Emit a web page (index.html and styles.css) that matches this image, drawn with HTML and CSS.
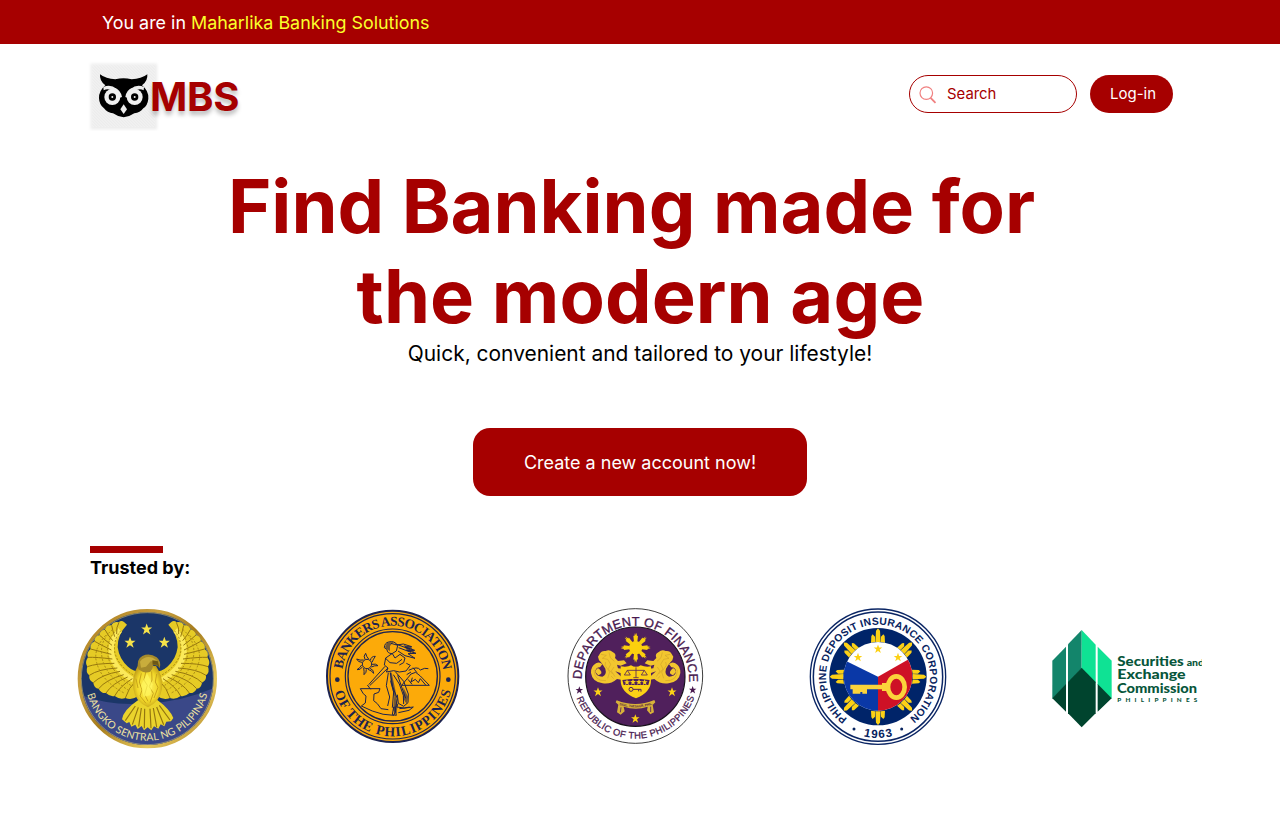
FILE: index.html
```html
<!DOCTYPE html>
<html lang="en">
<head>
<meta charset="utf-8">
<title>Maharlika Banking Solutions</title>
<link rel="stylesheet" href="styles.css">
</head>
<body>
<div class="topbar"><span>You are in <span class="topbar-brand">Maharlika Banking Solutions</span></span></div>

<header class="header">
  <div class="logo">
    <svg class="owl" viewBox="24 29 213 213" aria-hidden="true">
      <defs>
        <filter id="soft" x="-10%" y="-10%" width="120%" height="120%"><feGaussianBlur stdDeviation="4"/></filter>
        <pattern id="hatch" width="9" height="9" patternUnits="userSpaceOnUse"><path d="M0 0L9 9" stroke="#f8f8f8" stroke-width="2"/></pattern>
      </defs>
      <rect x="32" y="40" width="199" height="197" fill="#ececec" filter="url(#soft)"/>
      <rect x="36" y="42" width="190" height="188" fill="url(#hatch)"/>
      <path d="M60 72Q78 86 106 87Q130 81 155 87Q184 86 202 72Q204 92 186 105Q207 122 205 145Q203 165 190 174Q180 187 163 189Q147 200 131 201Q115 200 99 189Q82 187 72 174Q58 164 57 144Q56 122 76 105Q58 92 60 72Z" fill="#000"/>
      <path d="M70 110Q92 100 110 116L98 122Q84 112 71 120ZM192 110Q170 100 152 116L164 122Q178 112 191 120Z" fill="#eee"/>
      <circle cx="97" cy="140" r="24" fill="#f0f0f0"/><circle cx="164" cy="140" r="24" fill="#f0f0f0"/>
      <path d="M103 112Q122 118 126 140L119 142Q116 124 101 118ZM158 112Q139 118 136 140L142 142Q145 124 160 118Z" fill="#eee"/>
      <circle cx="97" cy="140" r="11" fill="#000"/><circle cx="164" cy="140" r="11" fill="#000"/>
      <circle cx="97" cy="140" r="3" fill="#eee"/><circle cx="164" cy="140" r="3" fill="#eee"/>
      <path d="M131 162L141 177L131 191L121 177Z" fill="#eee"/>
    </svg>
    <span class="logo-text">MBS</span>
  </div>
  <div class="actions">
    <label class="search">
      <svg class="search-icon" viewBox="0 0 18 18" aria-hidden="true"><circle cx="7.3" cy="7.1" r="6.3"/><path d="M11.6 11.8L16.5 16.8"/></svg>
      <span class="search-text">Search</span>
    </label>
    <button class="login">Log-in</button>
  </div>
</header>

<main>
  <h1 class="headline"><span class="headline-first">Find Banking made for</span><span class="headline-second">the modern age</span></h1>
  <p class="tagline">Quick, convenient and tailored to your lifestyle!</p>
  <button class="cta">Create a new account now!</button>

  <section class="trusted">
    <div class="rule"></div>
    <h2 class="trusted-title">Trusted by:</h2>
    <div class="seals">

      <svg class="seal" viewBox="0 0 465 465">
        <defs>
          <linearGradient id="gold" x1="0" y1="0" x2="1" y2="1">
            <stop offset="0" stop-color="#a87818"/><stop offset=".3" stop-color="#c8a040"/><stop offset=".5" stop-color="#a67c1c"/><stop offset=".75" stop-color="#e6c85c"/><stop offset="1" stop-color="#a87c20"/>
          </linearGradient>
          <radialGradient id="plume" cx=".5" cy=".5" r=".6"><stop offset="0" stop-color="#fff36a"/><stop offset=".6" stop-color="#f2d829"/><stop offset="1" stop-color="#b08a14"/></radialGradient>
          <clipPath id="disc"><circle cx="232" cy="236" r="199"/></clipPath>
          <path id="star" d="M0-16L4-5L15-5L6 2L10 14L0 7L-10 14L-6 2L-15-5L-4-5Z"/>
          <g id="wing">
            <path d="M162 66Q154 60 146 67Q132 63 124 76Q109 75 104 89Q90 91 88 105Q72 110 74 124Q59 132 62 147Q48 158 54 172Q43 188 52 200Q46 216 58 226Q56 242 70 248Q72 264 86 266Q94 281 108 279Q122 292 134 288Q150 300 166 294Q188 302 206 286L224 214Q196 220 174 200Q148 178 143 142Q142 104 171 74Z" fill="#e6cb25"/>
            <path d="M150 90Q122 118 124 158Q132 208 190 240" fill="none" stroke="#fbe95a" stroke-width="16"/>
            <g fill="none" stroke="#96770e" stroke-width="3">
              <path d="M147 67Q138 82 140 102M125 76Q128 92 134 110M105 89Q113 105 128 122M88 105Q103 119 126 136M74 124Q93 135 124 150M62 147Q84 153 124 163M54 172Q79 171 127 177M52 200Q79 190 133 190M58 226Q86 207 142 204M70 248Q94 224 150 214M86 266Q108 239 161 224M108 279Q126 251 173 231M134 288Q150 258 187 236M166 294Q174 265 200 240"/>
            </g>
            <g fill="none" stroke="#a88915" stroke-width="3" stroke-dasharray="6 5">
              <path d="M142 88Q108 118 113 162Q120 215 182 256M128 88Q87 123 96 172Q105 225 174 270M107 106Q68 150 80 188Q95 244 164 280M153 92Q130 118 134 155Q143 200 198 229"/>
            </g>
          </g>
        </defs>
        <circle cx="232" cy="236" r="204" fill="#1b3668" stroke="url(#gold)" stroke-width="10"/>
        <path d="M30 284Q120 320 232 310Q340 304 436 262L436 450H30Z" fill="#3a4888" clip-path="url(#disc)"/>
        <circle cx="232" cy="236" r="198" fill="none" stroke="#e3cd76" stroke-width="1.5"/>
        <g fill="#f6e34a"><use href="#star" transform="translate(230 88) scale(1.1)"/><use href="#star" transform="translate(180 128) scale(1.1)"/><use href="#star" transform="translate(283 128) scale(1.1)"/></g>
        <use href="#wing"/><use href="#wing" transform="translate(466 0) scale(-1 1)"/>
        <path d="M205 300Q160 330 156 358L170 370L178 366L184 380L196 374L203 387L215 378L222 391L233 382L244 391L252 379L265 386L272 373L283 379L289 365L303 364L310 354Q300 328 262 300Z" fill="#ead32c"/>
        <path d="M196 318L166 362M205 322L187 374M214 324L206 380M224 326L223 385M240 326L243 385M250 324L260 381M260 321L281 374M268 316L300 360" stroke="#937510" stroke-width="3.5"/>
        <path d="M204 196Q184 232 190 266Q195 304 234 322Q270 304 276 266Q280 230 258 198Z" fill="url(#plume)"/>
        <path d="M214 220L208 246L216 270L210 288L228 310M228 212L222 240L232 256L224 284L234 304M245 214L246 240L238 260L250 280L240 308M260 222L256 246L264 262L252 294M198 236L204 264" fill="none" stroke="#c9a51b" stroke-width="3"/>
        <path d="M231 220L248 253L241 286L221 290L213 256Z" fill="#fff65c" opacity=".7"/>
        <path d="M205 208Q198 178 217 168Q239 158 260 172Q275 184 269 205Q263 194 250 195Q248 207 241 215Q223 222 205 208Z" fill="#a58a2b"/>
        <path d="M210 185Q224 166 248 173L264 184L242 184L228 200L213 203Z" fill="#c9ad3c"/>
        <path d="M247 181L263 183L269 204L260 194L248 194Z" fill="#6d5716"/>
        <path id="bsp" d="M46 236A186 186 0 0 0 418 236" fill="none"/>
        <text class="t-lato" font-size="31" fill="#f0e3a0"><textPath href="#bsp" startOffset="47" textLength="490">BANGKO SENTRAL NG PILIPINAS</textPath></text>
      </svg>

      <svg class="seal" viewBox="-12 0 465 465">
        <g fill="none" stroke="#1c2350">
          <circle cx="230" cy="229" r="197" fill="#fcaa09" stroke-width="6"/>
          <circle cx="230" cy="229" r="188" stroke-width="3.5"/>
          <circle cx="230" cy="229" r="142" stroke-width="3.5"/>
          <circle cx="230" cy="229" r="134" stroke-width="4"/>
        </g>
        <path id="bapTop" d="M78 229A152 152 0 0 1 382 229" fill="none"/>
        <path id="bapBot" d="M50 229A180 180 0 0 0 410 229" fill="none"/>
        <g class="t-serif" fill="#1c2350">
          <text font-size="40"><textPath href="#bapTop" startOffset="21" textLength="438">BANKERS ASSOCIATION</textPath></text>
          <text font-size="41"><textPath href="#bapBot" startOffset="47" textLength="474">OF THE PHILIPPINES</textPath></text>
        </g>
        <circle cx="64" cy="239" r="7" fill="#1c2350"/><circle cx="397" cy="239" r="7" fill="#1c2350"/>
        <g fill="none" stroke="#1c2350" stroke-width="3" stroke-linejoin="round">
          <circle cx="153" cy="192" r="14"/>
          <path d="M147 178Q141 168 149 160Q151 170 158 177M163 181Q166 168 178 169Q172 177 168 187M168 193Q180 190 186 197Q176 196 166 201M162 205Q174 210 173 220Q166 211 156 208M151 208Q152 218 144 224Q145 214 143 204M140 200Q133 211 123 209Q132 204 137 195M138 187Q126 187 122 177Q132 182 143 180"/>
          <path d="M218 126Q206 128 205 143L213 148Q213 160 228 161L241 153L245 137Q236 121 218 126ZM225 130Q241 139 262 132L287 140L267 141L296 151L272 151L300 160L276 161L297 175L267 167L246 153M240 132L282 148M248 143L285 157M229 161L237 174L252 163L267 174L263 188L250 195M228 161L209 174L205 195L216 204L211 216L233 212L250 216L270 213L283 196L271 190M209 175L222 188L242 190L258 178M216 204L161 257M207 199L158 254M154 255L164 268"/>
          <path d="M217 218L211 257L221 291L215 318M223 218L230 260L244 296L235 344M238 215L263 244L277 282L276 308L263 319L247 310L244 284M232 224L250 252L262 286L263 312M224 242L233 276L229 323M245 226L257 261L269 295M236 320L241 346L229 344L233 321M246 311L242 321L265 324L281 321M250 326L292 321L279 331L247 338"/>
          <path d="M133 266L192 266L188 277L174 282L173 302L184 311L195 326L217 329M133 266Q142 285 150 288L148 309L136 318L169 333Q201 346 234 346"/>
          <path d="M257 256L285 222L299 217L313 228L340 256ZM289 233L285 246L298 238L307 248L313 236L329 255M278 211Q305 197 313 210Q327 202 337 206M291 203L303 218M272 224L285 216M276 238L288 253"/>
        </g>
        <path d="M221 217L224 250L235 289L231 331L241 341L245 318L238 270L227 218ZM207 142L213 128L232 126L222 138L222 154ZM262 134L286 142L296 158L272 150ZM262 262L276 290L272 312L262 296Z" fill="#1c2350" opacity=".6"/>
      </svg>

      <svg class="seal" viewBox="-12 0 465 465">
        <defs>
          <g id="lion">
            <path d="M125 162Q130 151 143 153Q154 147 165 157Q176 162 171 174L180 183L198 181L206 190L188 197L177 194L180 205L200 207L204 216L189 220L172 214L190 230L194 240L177 237Q158 254 134 250Q103 246 99 219Q98 199 114 190Q125 184 133 193L126 202Q112 202 112 216Q115 230 133 230Q147 224 142 206Q130 187 123 181L120 170Z" fill="#f2c62f"/>
            <path d="M129 163L145 166L133 175L149 178L158 193L151 207L164 222M153 157L157 173L169 184M143 186L141 196L155 216L149 235M168 201L160 213L171 230M108 210Q108 244 144 242M159 228L167 236" fill="none" stroke="#d3a52a" stroke-width="2"/>
            <path d="M112 216Q118 197 127 211Q136 221 121 226Z" fill="#f2c62f"/>
          </g>
        </defs>
        <circle cx="232" cy="228" r="202" fill="#fff" stroke="#161616" stroke-width="2.5"/>
        <circle cx="232" cy="230" r="149" fill="#50205c" stroke="#17101b" stroke-width="3.5"/>
        <path id="dofTop" d="M71 238A161 161 0 1 1 393 238" fill="none"/>
        <path id="dofBot" d="M44 228A188 188 0 0 0 420 228" fill="none"/>
        <g class="t-sans" fill="#48194f" stroke="#48194f">
          <text font-size="38" stroke-width="1"><textPath href="#dofTop" startOffset="0" textLength="514">DEPARTMENT OF FINANCE</textPath></text>
          <text font-size="28" stroke-width=".8"><textPath href="#dofBot" startOffset="67" textLength="458">REPUBLIC OF THE PHILIPPINES</textPath></text>
        </g>
        <g fill="#48194f"><use href="#star" transform="translate(64 271) scale(.75)"/><use href="#star" transform="translate(404 270) scale(.75)"/></g>
        <g transform="translate(233 143)" fill="#fcd00d">
          <circle r="20"/>
          <g id="raypair"><path id="ray" d="M-5-18L-7-36L-4-35L-2-45L0-37L2-45L4-35L7-36L5-18Z"/><use href="#ray" transform="rotate(180)"/></g>
          <use href="#raypair" transform="rotate(45)"/><use href="#raypair" transform="rotate(90)"/><use href="#raypair" transform="rotate(135)"/>
        </g>
        <use href="#lion"/><use href="#lion" transform="translate(466 0) scale(-1 1)"/>
        <path d="M188 199Q209 202 219 196Q234 205 248 196Q262 202 279 199V239Q280 276 234 295Q187 276 188 239Z" fill="#fcd116"/>
        <path d="M193 240L219 237H248L275 240L271 255H197Z" fill="#50205c"/>
        <g fill="#fcd116"><use href="#star" transform="translate(207 247) scale(.6)"/><use href="#star" transform="translate(225 246) scale(.6)"/><use href="#star" transform="translate(243 246) scale(.6)"/><use href="#star" transform="translate(260 247) scale(.6)"/></g>
        <g fill="none" stroke="#50205c" stroke-width="2.4"><path d="M234 202V233M208 211H259M208 211L199 225H217ZM259 211L250 225H268ZM226 233H242"/><circle cx="219" cy="268" r="6" stroke-width="3"/><path d="M225 268H249V275M242 268V274" stroke-width="3"/></g>
        <path d="M176 301Q234 324 289 300L292 307L284 315L288 337L277 343L267 331L269 320Q234 332 197 320L200 334L188 344L177 337L181 314L173 307Z" fill="#d8b13a"/>
        <path d="M189 322L187 337M278 320V336" stroke="#50205c" stroke-width="2.5"/>
        <path id="ribbon" d="M178 313Q234 332 288 312" fill="none"/>
        <text class="t-sans" font-size="10" font-weight="bold" fill="#54213f"><textPath href="#ribbon" startOffset="6" textLength="102" lengthAdjust="spacingAndGlyphs">SIGIL. THESAUR. PHIL.</textPath></text>
        <g fill="#fcd116"><use href="#star" transform="translate(120 276) scale(.9)"/><use href="#star" transform="translate(342 276) scale(.9)"/><use href="#star" transform="translate(232 356) scale(.85)"/></g>
      </svg>

      <svg class="seal" viewBox="-12 0 465 465">
        <defs><clipPath id="flagclip"><circle cx="234" cy="229" r="103"/></clipPath></defs>
        <circle cx="234" cy="230" r="203" fill="#fff" stroke="#0a2564" stroke-width="4"/>
        <circle cx="234" cy="230" r="194" fill="#fff" stroke="#0a2564" stroke-width="4.5"/>
        <circle cx="234" cy="230" r="146" fill="#002469"/>
        <g transform="translate(234 230)" fill="#fcd116">
          <g id="beams"><path id="beam" d="M-21-102L-20-122L-16-127L-9-120V-104ZM-8-104L-6-138L0-145L6-138L8-104ZM9-104V-120L16-127L20-122L21-102Z"/><use href="#beam" transform="rotate(180)"/></g>
          <use href="#beams" transform="rotate(45)"/><use href="#beams" transform="rotate(90)"/><use href="#beams" transform="rotate(135)"/>
        </g>
        <g clip-path="url(#flagclip)">
          <path d="M120 120H350V350H120Z" fill="#fff"/>
          <path d="M120 174L234 230V350H120Z" fill="#0a38a7"/>
          <path d="M350 164L234 230V350H350Z" fill="#ce1126"/>
        </g>
        <g fill="#fcd116"><use href="#star" transform="translate(234 147) scale(.85)"/><use href="#star" transform="translate(174 172) scale(.85)"/><use href="#star" transform="translate(294 172) scale(.85)"/></g>
        <ellipse cx="289" cy="261" rx="25" ry="32" fill="none" stroke="#fbd33b" stroke-width="14"/>
        <path d="M151 254H246V249H263V273H246V268H201V281H187V276H181V281H158V268H151Z" fill="#fbd33b"/>
        <path id="pdic" d="M142 356A156 156 0 1 1 326 356" fill="none"/>
        <path id="year" d="M50 230A184 184 0 0 0 418 230" fill="none"/>
        <g class="t-sans" font-weight="bold" fill="#08245f">
          <text font-size="31"><textPath href="#pdic" startOffset="0" textLength="780">PHILIPPINE DEPOSIT INSURANCE CORPORATION</textPath></text>
          <text font-size="35"><textPath href="#year" startOffset="245" textLength="88">1963</textPath></text>
        </g>
        <circle cx="162" cy="387" r="4.5" fill="#08245f"/><circle cx="305" cy="387" r="4.5" fill="#08245f"/>
      </svg>

      <svg class="sec" viewBox="-6 0 492 360">
        <path d="M37 122L78 80V194L37 237Z" fill="#13856b"/>
        <path d="M84 73L125 30V145L84 190Z" fill="#13856b"/>
        <path d="M125 30L167 74V190L125 145Z" fill="#0fe294"/>
        <path d="M173 80L215 122V237L173 194Z" fill="#0fe294"/>
        <path d="M84 186L125 143L167 186V280L125 322L84 280Z" fill="#00442e"/>
        <path d="M78 192V275L37 235ZM173 192V275L215 235Z" fill="#00442e"/>
        <g class="t-geo" fill="#07563b">
          <text x="232" y="138" font-size="37" textLength="199" lengthAdjust="spacingAndGlyphs">Securities</text>
          <text x="440" y="138" font-size="27" textLength="52" lengthAdjust="spacingAndGlyphs">and</text>
          <text x="232" y="178" font-size="37" textLength="205" lengthAdjust="spacingAndGlyphs">Exchange</text>
          <text x="231" y="218" font-size="37" textLength="240" lengthAdjust="spacingAndGlyphs">Commission</text>
          <text x="232" y="245" font-size="19" textLength="240">PHILIPPINES</text>
        </g>
      </svg>
    </div>
  </section>
</main>
</body>
</html>
```
FILE: styles.css
```css
* { box-sizing: border-box; }
body { margin: 0; background: #fff; color: #000; font-family: Inter, "Liberation Sans", sans-serif; overflow: hidden; }
button { font: inherit; border: 0; padding: 0; }
.topbar { height: 44px; padding: 2px 102px 0; background: #a60000; color: #fff; font-size: 17.9px; display: flex; align-items: center; line-height: 22px; }
.topbar-brand { color: #fbff2b; }
.header { height: 106px; padding: 17px 107px 0 88px; display: flex; justify-content: space-between; align-items: flex-start; }
.logo { display: flex; align-items: center; }
.owl { width: 71px; height: 71px; display: block; margin-right: -9px; margin-top: -1px; }
.logo-text { position: relative; font-size: 40px; font-weight: 700; line-height: 48px; letter-spacing: -.2px; padding-top: 2px; color: #a60000; text-shadow: 0 4px 4px rgba(0, 0, 0, .25); }
.actions { display: flex; gap: 13px; margin-top: 14px; font-size: 15px; }
.search { width: 168px; height: 38px; border: 1px solid #a60000; border-radius: 19px; padding-left: 9px; display: flex; align-items: center; gap: 10px; color: #a60000; }
.search-text { font-size: 14.9px; line-height: 18px; }
.search-icon { width: 18px; height: 18px; margin-top: 1px; fill: none; stroke: #f08080; stroke-width: 1.2; }
.search-icon path { stroke-width: 1.8; }
.login { width: 83px; height: 38px; border-radius: 19px; background: #a60000; color: #fff; padding: 0 0 2px 3px; }
main { display: flex; flex-direction: column; align-items: center; }
.headline { margin: 11px 0 0; font-size: 74px; line-height: 90px; font-weight: 700; color: #a60000; display: flex; flex-direction: column; align-items: center; white-space: nowrap; }
.headline-first { padding-right: 17px; }
.headline-second { letter-spacing: .08px; padding-left: 1px; }
.tagline { margin: 0; font-size: 20.95px; line-height: 26px; }
.cta { width: 334px; height: 68px; margin-top: 61px; border-radius: 17px; background: #a60000; color: #fff; font-size: 18px; }
.trusted { width: 100%; padding: 50px 0 0 70px; }
.rule { width: 73px; height: 7px; margin-left: 20px; background: #a60000; }
.trusted-title { margin: 4px 0 0 20px; font-size: 18px; line-height: 22px; font-weight: 700; }
.seals { display: flex; gap: 87px; margin-top: 21px; }
.seal { width: 155px; height: 155px; flex: none; }
.sec { width: 164px; height: 120px; flex: none; margin-top: 20px; }
.t-lato { font-family: Lato, sans-serif; }
.t-serif { font-family: "Liberation Serif", serif; font-weight: 700; }
.t-sans { font-family: "Liberation Sans", sans-serif; }
.t-geo { font-family: Lato, sans-serif; font-weight: 900; }
```
